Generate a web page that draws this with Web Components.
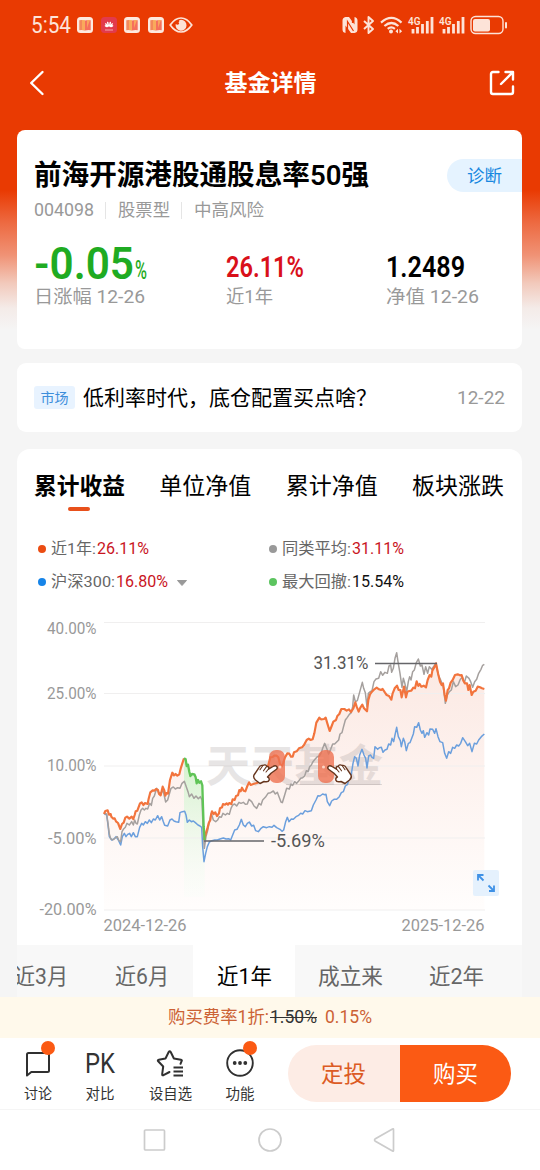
<!DOCTYPE html>
<html lang="zh-CN">
<head>
<meta charset="utf-8">
<title>基金详情</title>
<style>
  html, body {
    margin: 0;
    width: 540px;
    height: 1170px;
    overflow: hidden;
    font-family: Roboto, "Noto Sans CJK SC", sans-serif;
  }
</style>
</head>
<body>
<fund-page></fund-page>

<script>
const ICONS = {
  book: { w: 16, h: 16, body: `
    <rect width="16" height="16" rx="3.5" fill="#fde9df"/>
    <path d="M2.3 3.2q3-.8 5.7.4v10q-2.8-1-5.7-.4z" fill="#f3895a"/>
    <path d="M13.7 3.2q-3-.8-5.7.4v10q2.8-1 5.7-.4z" fill="#f6705c"/>
    <path d="M5 3h3v10.300l-3-.6zM10 3l3 0-3 8z" fill="#fbb65c" opacity=".75"/>` },
  huawei: { w: 16, h: 16, body: `
    <rect width="16" height="16" rx="3.5" fill="#e23a4c"/>
    <g stroke="#fff" stroke-width="1.4" stroke-linecap="round"><path d="M7.400 9 6.700 5.500M8.600 9 9.300 5.500M6.600 9.300 4.800 6.800M9.400 9.300l1.800-2.500M6 9.600l-1.600-.8M10 9.600l1.600-.8"/></g>
    <path d="M4 13h8" stroke="#f3a2a8" stroke-width="1"/>` },
  eye: { w: 24, h: 18, body: `
    <path d="M1.2 9Q6 2 12 2t10.800 7Q18 16 12 16T1.200 9z" fill="none" stroke="#fde3d8" stroke-width="1.7"/>
    <path d="M12 3.8A5.5 5.5 0 1 1 6.7 8q2 1.5 3.3 0t0-3.400q1-.8 2-.8z" fill="#fde3d8"/>
    <circle cx="11" cy="6.5" r="1.3" fill="#fde3d8"/>` },
  nfc: { w: 16, h: 18, body: `
    <path d="M3.5 1H7l5.500 7.500V1q3 .5 3 3.500v9q0 3-3 3.500H9L3.500 9.500V17q-3-.5-3-3.500v-9Q.5 1.500 3.500 1z" fill="#fde3d8"/>
    <path d="M5.500 17V5.500l6 9.500M10.500 1v6" fill="none" stroke="#ea3a02" stroke-width="1.2"/>` },
  bluetooth: { w: 12, h: 18, body: `
    <path d="M1 5l9 8-4.500 4V1L10 5l-9 8" fill="none" stroke="#fde3d8" stroke-width="1.9" stroke-linejoin="round"/>` },
  wifi: { w: 23, h: 18, body: `
    <g fill="none" stroke="#fde3d8" stroke-width="2.2"><path d="M1 6.600q10.500-9.400 20.500 0"/><path d="M4.400 10q7-6 14 0"/><path d="M7.700 12.800q3.600-2.700 7.200 0"/></g>
    <circle cx="11" cy="15.600" r="2" fill="#fde3d8"/>
    <path d="M18 12.800v4.800l-2.600-2.400zM19.500 12.800v4.800l2.600-2.400z" fill="#fde3d8"/>` },
  signal: { w: 26, h: 18, body: `
    <text x="0" y="9" font-family="Roboto" font-size="11" font-weight="600" fill="#fde3d8" textLength="12.5" lengthAdjust="spacingAndGlyphs">4G</text>
    <path d="M5 13v4.500M9.500 11v6.500M14.500 8v9.500M19.300 5v12.500M24 1v16.500" stroke="#fde3d8" stroke-width="2.8"/>` },
  battery: { w: 38, h: 20, body: `
    <rect x="1" y="1.5" width="32" height="17" rx="4.5" fill="none" stroke="#fde3d8" stroke-width="1.4"/>
    <rect x="3" y="4" width="17" height="12.5" rx="2" fill="#fde3d8"/>
    <path d="M36 8v4.500" stroke="#fde3d8" stroke-width="2" stroke-linecap="round"/>` },
  back: { w: 16, h: 26, body: `
    <path d="M13.500 2 2.200 13l11.300 11" fill="none" stroke="#fff" stroke-width="2.4" stroke-linecap="round" stroke-linejoin="round"/>` },
  share: { w: 26, h: 26, body: `
    <g fill="none" stroke="#fff" stroke-width="2.4" stroke-linecap="round" stroke-linejoin="round"><path d="M9.500 2H4Q2 2 2 4v18q0 2 2 2h18q2 0 2-2v-5.500"/><path d="M12 14 24 2M16.500 2H24v7.500"/></g>` },
  caret: { w: 10, h: 6, body: `<path d="M.5.500h9L5 5.500z" fill="#999" stroke="#999" stroke-linejoin="round"/>` },
  expand: { w: 26, h: 26, body: `
    <rect width="26" height="26" rx="2" fill="#e5f1fd"/>
    <path d="M10.500 5H5v5.500M5 5l5.500 5.500M16 21h5v-5.500M21 21l-5.500-5.500" fill="none" stroke="#3f91e6" stroke-width="1.8"/>` },
  comment: { w: 28, h: 28, body: `
    <path d="M3 5.500Q3 4 4.500 4h19Q25 4 25 5.500v16q0 1.500-1.500 1.500H7.300L3 26.500z" fill="none" stroke="#303030" stroke-width="2" stroke-linejoin="round"/>` },
  star: { w: 30, h: 28, body: `
    <g fill="none" stroke="#303030" stroke-width="2" stroke-linecap="round" stroke-linejoin="round"><path d="M14.500 23 8.500 26.200q-1.500.5-1.300-1.200l1-7.500-5-5.200q-1-1.300.6-1.600l6.700-1.200 3.200-6.500q1-1.500 2 0l3.200 6.500 7 1.200q1.600.4.600 1.600L25.500 14.800"/><path d="M18.500 18.500h9.500M18.500 22.500h9.500M18.500 26.500h9.500" stroke-linecap="butt"/></g>` },
  more: { w: 30, h: 30, body: `
    <circle cx="15" cy="15" r="12.800" fill="none" stroke="#303030" stroke-width="1.9"/>
    <g fill="#303030"><circle cx="9.700" cy="15" r="1.900"/><circle cx="15" cy="15" r="1.900"/><circle cx="20.300" cy="15" r="1.900"/></g>` },
  square: { w: 24, h: 24, body: `<rect x="1.500" y="2" width="20" height="20" rx="1" fill="none" stroke="#ccc" stroke-width="1.7"/>` },
  circle: { w: 24, h: 24, body: `<circle cx="12" cy="12" r="11" fill="none" stroke="#ccc" stroke-width="1.7"/>` },
  triangle: { w: 24, h: 24, body: `<path d="M19.500 1.500v21Q19.500 23.500 18.500 23L1 13Q0 12 1 11L18.500 1q1-.5 1 .5z" fill="none" stroke="#ccc" stroke-width="1.7"/>` }
};

class UiIcon extends HTMLElement {
  connectedCallback() {
    const icon = ICONS[this.getAttribute("name")];
    this.attachShadow({ mode: "open" }).innerHTML = `
      <style>
        :host { display: block; flex: none; width: ${icon.w}px; height: ${icon.h}px; }
        svg { display: block; overflow: visible; }
      </style>
      <svg width="${icon.w}" height="${icon.h}" viewBox="0 0 ${icon.w} ${icon.h}">${icon.body}</svg>
    `;
  }
}

// One line of text, condensed or stretched to the width given in "w"
class FitText extends HTMLElement {
  connectedCallback() {
    const width = this.getAttribute("w");
    this.attachShadow({ mode: "open" }).innerHTML = `
      <style>
        :host { display: block; flex: none; width: ${width}px; white-space: nowrap; }
        span { display: inline-block; vertical-align: top; transform-origin: 0 50%; }
      </style>
      <span><slot></slot></span>
    `;
    const span = this.shadowRoot.querySelector("span");
    span.style.transform = `scaleX(${width / span.getBoundingClientRect().width})`;
  }
}

class StatusBar extends HTMLElement {
  constructor() {
    super();
    this.attachShadow({ mode: "open" }).innerHTML = `
      <style>
        :host { display: flex; align-items: center; box-sizing: border-box; height: 50px; padding: 0 32px 0 31px; color: #fde3d8; }
        .time { font-size: 23px; line-height: 26px; margin: 2px 6px 0 0; }
        .apps, .system { display: flex; align-items: center; }
        .apps { gap: 7.6px; }
        .system { margin-left: auto; gap: 5px; }
      </style>
      <fit-text class="time" w="40">5:54</fit-text>
      <div class="apps">
        <ui-icon name="book"></ui-icon>
        <ui-icon name="huawei"></ui-icon>
        <ui-icon name="book"></ui-icon>
        <ui-icon name="book"></ui-icon>
        <ui-icon name="eye" style="margin-left:-2px"></ui-icon>
      </div>
      <div class="system">
        <ui-icon name="nfc"></ui-icon>
        <ui-icon name="bluetooth"></ui-icon>
        <ui-icon name="wifi"></ui-icon>
        <ui-icon name="signal"></ui-icon>
        <ui-icon name="signal"></ui-icon>
        <ui-icon name="battery"></ui-icon>
      </div>
    `;
  }
}

class NavHeader extends HTMLElement {
  constructor() {
    super();
    this.attachShadow({ mode: "open" }).innerHTML = `
      <style>
        :host { display: flex; align-items: center; justify-content: space-between; box-sizing: border-box; height: 66px; padding: 0 25px 0 29px; color: #fff; }
        .title { font-size: 23px; line-height: 30px; font-weight: 700; margin: 2px 0 0 7px; }
      </style>
      <ui-icon name="back"></ui-icon>
      <fit-text class="title" w="92"><slot></slot></fit-text>
      <ui-icon name="share"></ui-icon>
    `;
  }
}

class FundSummary extends HTMLElement {
  constructor() {
    super();
    this.attachShadow({ mode: "open" }).innerHTML = `
      <style>
        :host { display: block; box-sizing: border-box; height: 219px; padding: 29px 0 0 17px; background: #fff; border-radius: 8px; }
        .top { display: flex; align-items: center; justify-content: space-between; height: 33px; }
        .name { font-size: 28px; line-height: 33px; font-weight: 600; color: #000; }
        .diagnose { display: flex; align-items: center; box-sizing: border-box; width: 75px; height: 33px; padding: 0 0 2px 20px; border-radius: 17px 0 0 17px; background: #e5f3ff; color: #1787e0; font-size: 17.5px; }
        .meta { display: flex; align-items: center; height: 24px; margin-top: 6px; color: #999; font-size: 17.5px; line-height: 24px; }
        .code { font-size: 19px; }
        .meta i { width: 1px; height: 17px; background: #e5e5e5; margin: 0 12px 0 11px; }
        .stats { display: grid; grid-template-columns: 192px 160px 1fr; margin-top: 20px; }
        .value { display: flex; align-items: baseline; height: 44px; line-height: 44px; }
        .label { color: #999; font-size: 18px; line-height: 22px; }
        .green { color: #1fab22; }
        .red { color: #d9101a; }
        .big { display: flex; font-size: 45px; font-weight: 600; }
        .unit { font-size: 25px; margin-left: 1px; font-weight: 500; }
        .mid { font-size: 29px; font-weight: 600; margin-top: 3px; }
      </style>
      <div class="top">
        <fit-text class="name" w="335">前海开源港股通股息率50强</fit-text>
        <div class="diagnose"><fit-text w="35">诊断</fit-text></div>
      </div>
      <div class="meta">
        <fit-text class="code" w="60">004098</fit-text><i></i>
        <fit-text w="52">股票型</fit-text><i></i>
        <fit-text w="70">中高风险</fit-text>
      </div>
      <div class="stats">
        <div>
          <div class="value green"><fit-text class="big" w="100">-0.05</fit-text><fit-text class="unit" w="12">%</fit-text></div>
          <fit-text class="label" w="111">日涨幅 12-26</fit-text>
        </div>
        <div>
          <div class="value red"><fit-text class="mid" w="78">26.11%</fit-text></div>
          <fit-text class="label" w="47">近1年</fit-text>
        </div>
        <div>
          <div class="value"><fit-text class="mid" w="79">1.2489</fit-text></div>
          <fit-text class="label" w="93">净值 12-26</fit-text>
        </div>
      </div>
    `;
  }
}

class NewsRow extends HTMLElement {
  constructor() {
    super();
    this.attachShadow({ mode: "open" }).innerHTML = `
      <style>
        :host { display: flex; align-items: center; box-sizing: border-box; height: 69px; padding: 0 17px; background: #fff; border-radius: 9px; }
        .tag { display: flex; align-items: center; justify-content: center; box-sizing: border-box; width: 41px; height: 23px; padding-bottom: 2px; border-radius: 3px; background: #e8f3ff; color: #3d8edb; font-size: 14px; }
        .text { margin-left: 8px; font-size: 21px; line-height: 30px; color: #000; }
        .date { margin-left: auto; font-size: 18.5px; line-height: 24px; color: #999; }
      </style>
      <div class="tag"><fit-text w="28">市场</fit-text></div>
      <fit-text class="text" w="294">低利率时代，底仓配置买点啥？</fit-text>
      <fit-text class="date" w="48">12-22</fit-text>
    `;
  }
}

class LegendItem extends HTMLElement {
  connectedCallback() {
    const { label, lw, value, color, tone = "#c9151e" } = this.dataset;
    this.attachShadow({ mode: "open" }).innerHTML = `
      <style>
        :host { display: flex; align-items: center; height: 33px; font-size: 15.5px; line-height: 22px; color: #666; }
        .dot { width: 8px; height: 8px; margin-right: 5px; border-radius: 50%; background: ${color}; }
        fit-text { margin-top: 1px; }
        .value { margin-left: 1px; font-size: 16.5px; color: ${tone}; }
      </style>
      <span class="dot"></span>
      <fit-text w="${lw}">${label}:</fit-text>
      <fit-text class="value" w="52">${value}</fit-text>
      <slot></slot>
    `;
  }
}

// Series are plotted on a grid of a third of a pixel
const MAIN_RISE = "42,522 46,513 53,511 57,524 62,522 64,530 70,536 74,535 78,544 84,549 91,567 96,552 101,548 106,533 111,530 118,536 125,530 130,537 134,525 137,514 142,512 150,490 155,487 160,495 165,489 173,492 176,476 181,457 188,451 193,452 198,447 204,450 207,462 212,466 218,440 223,451 226,467 229,459 234,461 240,420 247,398 252,406 257,402 262,407 268,403 272,386 277,370 282,355";
const MAIN_DRAWDOWN = "282,355 287,358 290,378 294,374 298,395 301,408 306,402 313,403 317,412 320,430 324,420 328,428 333,424 337,436 339,500 341,560 344,600";
const MAIN_LEFT = "344,600 345,590 348,578 352,566 356,550 361,540 363,525 366,514 371,522 376,517 381,528 387,520 390,505 396,502 399,492 405,494 410,490 414,494 418,489 424,492 428,478 434,480 438,468 444,466 448,450 452,454 456,443 461,452 466,454 472,438 477,427 482,435 490,432 497,430 503,428 515,410 525,395 535,375 541,352 548,351 553,347 560,347 565,352 570,372 575,380 580,368 585,352";
const MAIN_RIGHT = "22,340 28,341 33,350 38,350 42,337 50,334 57,325 66,322 72,315 80,300 86,296 92,300 98,298 103,280 109,248 118,233 123,238 132,237 137,233 142,250 149,273 155,258 160,245 168,240 172,228 178,222 184,207 193,207 200,212 207,208 213,216 220,205 226,187 230,200 236,215 241,203 247,194 252,205 261,214 265,180 270,163 276,155 283,148 290,143 297,148 303,150 308,147 315,158 320,165 327,168 334,179 338,160 344,145 351,137 356,150 361,150 365,172 372,140 378,172 382,155 388,153 394,152 400,143 405,145 410,124 415,138 419,132 424,140 431,137 438,142 443,120 449,105 454,110 457,92 464,80 468,70 474,100 480,125 485,135 489,130 494,165 498,182 503,150 507,145 512,128 518,120 525,105 533,103 540,106 545,105 550,122 555,130 561,130 565,150 569,135 575,165 580,155 587,152 593,140 600,142 606,145 613,147";
const PEER_LEFT = "42,520 50,522 54,550 58,582 62,596 68,600 76,594 82,590 87,602 92,605 96,575 100,568 106,562 111,550 118,555 125,545 130,555 134,540 138,550 142,552 148,525 153,510 158,505 163,510 168,505 173,507 179,490 184,496 188,475 193,468 200,445 207,460 213,458 219,452 223,468 227,486 233,480 238,462 243,445 250,441 256,447 263,443 270,445 276,430 283,424 288,438 294,455 298,470 305,462 312,475 318,468 325,476 331,470 336,480 339,560 343,625 348,590 353,572 358,545 364,520 370,540 377,545 383,540 388,530 394,532 399,520 406,525 412,520 418,523 423,505 428,495 434,492 440,498 447,487 453,490 460,487 466,493 472,492 477,478 485,485 492,498 500,505 507,490 513,495 518,480 526,472 534,460 542,458 550,453 556,462 562,457 567,470";
const PEER_RIGHT = "3,486 7,488 14,465 20,445 28,447 33,432 38,436 44,425 50,430 56,423 62,415 68,413 74,408 79,392 84,395 89,380 94,375 99,365 105,358 112,350 118,348 124,338 128,325 134,310 140,325 146,342 152,328 158,312 164,312 170,306 176,300 180,282 186,278 190,262 196,240 202,232 208,223 214,218 218,200 221,165 226,185 232,182 238,160 247,127 251,145 256,158 261,200 265,160 271,155 276,152 282,125 288,117 296,115 302,95 308,106 315,97 322,100 327,78 332,75 335,97 340,85 345,55 350,38 354,65 360,100 366,142 370,115 374,128 380,155 385,125 389,110 393,120 398,95 403,90 409,68 415,57 421,78 426,75 432,103 437,80 443,100 448,80 455,88 462,78 468,72 475,105 482,120 490,140 496,190 502,165 508,155 514,150 520,125 527,140 534,135 541,118 547,112 553,128 559,108 567,115 572,125 578,142 584,125 590,118 596,100 603,88 608,76 613,73";
const INDEX_LEFT = "42,520 50,525 54,555 58,590 65,600 72,597 78,590 85,600 92,615 97,590 103,580 108,590 113,583 119,580 124,590 130,578 136,590 142,590 149,562 155,550 160,555 166,545 172,550 178,540 184,548 190,537 196,540 203,527 209,540 215,530 220,545 224,556 233,558 240,540 246,537 252,543 258,545 266,547 270,518 277,515 284,514 288,525 292,547 298,540 304,545 310,543 316,548 324,555 330,558 335,562 338,620 342,665 347,640 352,620 358,606 366,602 374,600 382,600 390,597 400,594 408,597 416,596 422,600 428,585 434,570 441,568 448,555 454,538 460,555 466,560 472,550 478,546 485,558 491,556 497,572 505,575 512,566 520,560 530,563 538,560 546,562 552,556 560,563";
const INDEX_RIGHT = "0,568 6,574 11,570 17,545 22,532 27,545 34,537 40,538 48,530 56,526 62,520 68,522 75,512 82,515 94,512 100,495 108,480 114,467 120,468 128,462 134,464 138,463 142,485 149,497 155,483 162,478 170,478 178,470 184,458 190,455 196,438 202,434 208,415 214,402 219,370 224,350 229,355 234,378 239,345 246,328 252,345 257,355 261,384 266,348 272,345 276,352 281,355 285,320 293,328 298,323 304,322 309,337 315,330 321,328 326,312 332,315 336,295 341,305 345,285 350,262 355,290 361,302 364,320 370,295 374,305 379,332 385,310 390,308 394,298 400,282 404,260 410,262 416,248 421,270 426,280 430,272 434,292 441,278 446,285 450,267 458,268 464,280 468,266 474,290 480,305 488,308 494,340 500,355 506,335 512,340 518,322 524,325 530,315 536,318 542,310 548,293 556,305 563,317 569,310 576,335 583,310 590,312 596,300 604,290 613,282";

const shift = (points, dx) =>
  points
    .split(" ")
    .map((p) => {
      const [x, y] = p.split(",").map(Number);
      return `${x + dx},${y}`;
    })
    .join(" ");

class YieldChart extends HTMLElement {
  constructor() {
    super();
    const recovery = MAIN_LEFT + " " + shift(MAIN_RIGHT, 570);
    const peer = PEER_LEFT + " " + shift(PEER_RIGHT, 570);
    const index = INDEX_LEFT + " " + shift(INDEX_RIGHT, 570);
    const grid = [622.5, 693.5, 766, 838, 910];
    const ticks = ["40.00%", "25.00%", "10.00%", "-5.00%", "-20.00%"];
    const tickX = [47, 47, 47, 48, 39.5];
    const hand = `
      <path d="M.5-.8Q2-2 4-.5L8.500 2.200Q7.500-.6 10.300-.8 11.500-3 14.200-1.500 16.800-2.200 18.200.8L23 8Q24.200 10.500 21.500 13L17 16.500 13 14.500Q8.500 15.500 7.800 13 7.500 10.500 9.500 10L6 6.200.5 2.300Q-1 .8.5-.8z" fill="#fff" stroke="#66351d" stroke-width="1.4" stroke-linejoin="round"/>
      <path d="M8.500 2l2.500 3M10.500-.4l3 4.200M14.300-1.200l2.700 3.900" fill="none" stroke="#66351d" stroke-width="1.1" stroke-linecap="round"/>`;

    this.attachShadow({ mode: "open" }).innerHTML = `
      <style>
        :host { display: block; position: relative; height: 345px; }
        svg { display: block; }
        text { font-family: Roboto, "Noto Sans CJK SC", sans-serif; }
        .axis { font-size: 16px; fill: #999; }
        .mark { font-size: 18px; fill: #555; }
        .line { fill: none; stroke-linejoin: round; }
        ui-icon { position: absolute; right: 23px; bottom: 49px; }
      </style>
      <svg width="505" height="345" viewBox="17 600 505 345">
        <defs>
          <linearGradient id="warm" gradientUnits="userSpaceOnUse" x1="0" y1="70" x2="0" y2="810">
            <stop offset="0" stop-color="#fbe5de"/><stop offset="1" stop-color="#fffdfc"/>
          </linearGradient>
          <linearGradient id="fresh" gradientUnits="userSpaceOnUse" x1="0" y1="355" x2="0" y2="770">
            <stop offset="0" stop-color="#d2f2cc"/><stop offset="1" stop-color="#f3fff7" stop-opacity=".2"/>
          </linearGradient>
        </defs>
        <g transform="translate(90 640) scale(.333333)">
          <polygon points="${MAIN_RISE} ${MAIN_DRAWDOWN} ${recovery} 1183,810 42,810" fill="url(#warm)" opacity=".85"/>
          <polygon points="${MAIN_DRAWDOWN} 344,770 282,770" fill="url(#fresh)"/>
        </g>
        ${grid.map((y) => `<path d="M104 ${y}h381" stroke="#f0efef" stroke-width="1"/>`).join("")}
        <text x="206" y="782" font-size="44" font-weight="700" fill="#8a8080" opacity=".2" textLength="177" lengthAdjust="spacingAndGlyphs">天天基金</text>
        <path d="M286 784.500h96" stroke="#8a8080" stroke-opacity=".25"/>
        <g class="line" transform="translate(90 640) scale(.333333)">
          <polyline points="${index}" stroke="#6b9fdd" stroke-width="4.500"/>
          <polyline points="${peer}" stroke="#a5a09e" stroke-width="4.500"/>
          <polyline points="${MAIN_RISE}" stroke="#f2743d" stroke-width="6.500"/>
          <polyline points="${recovery}" stroke="#f2743d" stroke-width="6.500"/>
          <polyline points="${MAIN_DRAWDOWN}" stroke="#5fc456" stroke-width="7"/>
        </g>
        <path d="M375 663.500h62M204 841h60" stroke="#656569" stroke-width="1.4"/>
        <text class="mark" x="313.500" y="669" textLength="55" lengthAdjust="spacingAndGlyphs">31.31%</text>
        <text class="mark" x="271" y="846.500" textLength="54" lengthAdjust="spacingAndGlyphs">-5.69%</text>
        <g fill="#ed7150" fill-opacity=".8">
          <rect x="269" y="750" width="16" height="33" rx="7"/>
          <rect x="318" y="750" width="16" height="33" rx="7"/>
        </g>
        <circle cx="280" cy="767" r="1.500" fill="#fcd5c6"/><circle cx="323.500" cy="767" r="1.500" fill="#fcd5c6"/>
        <g transform="translate(328 767)">${hand}</g>
        <g transform="translate(277 767) scale(-1 1)">${hand}</g>
        ${ticks.map((t, i) => `<text class="axis" x="${tickX[i]}" y="${[633.5, 699, 771, 843.5, 915][i]}" textLength="${96.500 - tickX[i]}" lengthAdjust="spacingAndGlyphs">${t}</text>`).join("")}
        <text class="axis" x="103.500" y="930.500" textLength="83" lengthAdjust="spacingAndGlyphs">2024-12-26</text>
        <text class="axis" x="401.500" y="930.500" textLength="83" lengthAdjust="spacingAndGlyphs">2025-12-26</text>
      </svg>
      <ui-icon name="expand"></ui-icon>
    `;
  }
}

class YieldCard extends HTMLElement {
  constructor() {
    super();
    this.attachShadow({ mode: "open" }).innerHTML = `
      <style>
        :host { display: block; height: 548px; background: #fff; border-radius: 13px 13px 0 0; overflow: hidden; }
        .tabs { display: flex; justify-content: space-between; padding: 22px 18px 0 17px; height: 62px; box-sizing: border-box; font-size: 23px; line-height: 32px; color: #000; }
        .active { font-weight: 700; }
        .active::after { content: ""; display: block; width: 22px; height: 4px; margin: 4px 0 0 34px; border-radius: 2px; background: #e8501b; }
        .legend { display: grid; grid-template-columns: 231px 1fr; padding: 21px 0 0 21px; }
        ui-icon[name="caret"] { margin: 2px 0 0 9px; }
        yield-chart { margin-top: 2px; }
        .periods { display: grid; grid-template-columns: 100px 102px 102px 110px 102px 40px; margin-left: -26px; height: 52px; background: #f8f8f8; color: #666; font-size: 22px; line-height: 64px; }
        .periods div { display: flex; justify-content: center; height: 52px; overflow: hidden; }
        .periods .on { background: #fff; color: #000; }
      </style>
      <div class="tabs">
        <div class="active"><fit-text w="91">累计收益</fit-text></div>
        <fit-text w="92">单位净值</fit-text>
        <fit-text w="92">累计净值</fit-text>
        <fit-text w="92">板块涨跌</fit-text>
      </div>
      <div class="legend">
        <legend-item data-label="近1年" data-lw="45" data-value="26.11%" data-color="#eb4c12"></legend-item>
        <legend-item data-label="同类平均" data-lw="69" data-value="31.11%" data-color="#999"></legend-item>
        <legend-item data-label="沪深300" data-lw="64" data-value="16.80%" data-color="#1684e8"><ui-icon name="caret"></ui-icon></legend-item>
        <legend-item data-label="最大回撤" data-lw="69" data-value="15.54%" data-color="#5cc45f" data-tone="#111"></legend-item>
      </div>
      <yield-chart></yield-chart>
      <div class="periods">
        <div><fit-text w="54">近3月</fit-text></div>
        <div><fit-text w="54">近6月</fit-text></div>
        <div class="on"><fit-text w="55">近1年</fit-text></div>
        <div><fit-text w="65">成立来</fit-text></div>
        <div><fit-text w="55">近2年</fit-text></div>
      </div>
    `;
  }
}

class FeeBar extends HTMLElement {
  constructor() {
    super();
    this.attachShadow({ mode: "open" }).innerHTML = `
      <style>
        :host { display: flex; align-items: center; justify-content: center; box-sizing: border-box; height: 41px; padding-bottom: 1px; background: #fff9eb; color: #cc6235; font-size: 17.5px; line-height: 24px; }
        .rate { font-size: 18.5px; }
        .old { margin: 0 8px 0 1px; color: #333; }
        del { text-decoration-thickness: 1px; }
      </style>
      <fit-text w="101">购买费率1折:</fit-text>
      <fit-text class="rate old" w="47"><del>1.50%</del></fit-text>
      <fit-text class="rate" w="47">0.15%</fit-text>
    `;
  }
}

class ActionItem extends HTMLElement {
  connectedCallback() {
    this.attachShadow({ mode: "open" }).innerHTML = `
      <style>
        :host { display: flex; flex-direction: column; align-items: center; position: relative; font-size: 14.5px; line-height: 20px; color: #333; }
        .icon { display: flex; align-items: center; justify-content: center; height: 38px; margin: 6px 0 3px; }
        .dot { position: absolute; top: 3px; right: 50%; margin-right: -17px; width: 14px; height: 14px; border-radius: 50%; background: #fb5a14; }
      </style>
      <div class="icon"><slot></slot></div>
      <fit-text w="${this.getAttribute("lw")}">${this.getAttribute("label")}</fit-text>
      ${this.hasAttribute("dot") ? '<span class="dot"></span>' : ""}
    `;
  }
}

class ActionBar extends HTMLElement {
  constructor() {
    super();
    this.attachShadow({ mode: "open" }).innerHTML = `
      <style>
        :host { display: flex; box-sizing: border-box; height: 72px; padding-right: 29px; background: #fff; border-bottom: 1px solid #f5f5f5; }
        .items { display: grid; grid-template-columns: 62px 62px 78px 62px; margin-left: 7px; width: 264px; }
        .pk { font-size: 28px; line-height: 34px; margin-top: 2px; color: #333; }
        .buttons { display: grid; grid-template-columns: 1fr 1fr; width: 223px; height: 57px; margin: 7px 0 0 auto; border-radius: 29px; overflow: hidden; font-size: 23px; }
        .buttons div { display: flex; align-items: center; justify-content: center; box-sizing: border-box; padding-bottom: 3px; background: #fb5a14; color: #fff; }
        .buttons .plan { background: #fdece5; color: #dc5b24; }
      </style>
      <div class="items">
        <action-item label="讨论" lw="28" dot><ui-icon name="comment"></ui-icon></action-item>
        <action-item label="对比" lw="29"><fit-text class="pk" w="30">PK</fit-text></action-item>
        <action-item label="设自选" lw="43"><ui-icon name="star"></ui-icon></action-item>
        <action-item label="功能" lw="29" dot><ui-icon name="more"></ui-icon></action-item>
      </div>
      <div class="buttons">
        <div class="plan"><fit-text w="45">定投</fit-text></div>
        <div><fit-text w="45">购买</fit-text></div>
      </div>
    `;
  }
}

class SystemNav extends HTMLElement {
  constructor() {
    super();
    this.attachShadow({ mode: "open" }).innerHTML = `
      <style>
        :host { display: flex; align-items: center; justify-content: center; gap: 91.5px; height: 60px; background: #fff; }
      </style>
      <ui-icon name="square"></ui-icon>
      <ui-icon name="circle"></ui-icon>
      <ui-icon name="triangle"></ui-icon>
    `;
  }
}

class FundPage extends HTMLElement {
  constructor() {
    super();
    this.attachShadow({ mode: "open" }).innerHTML = `
      <style>
        :host { display: block; height: 1170px; background: linear-gradient(#e93a02 0, #e93a02 190px, #ed6940 222px, #f09275 255px, #f2c9bb 283px, #f4ebe8 308px, #f5f5f5 330px); }
        nav-header { margin-bottom: 14px; }
        main { padding: 0 18px 0 17px; }
        news-row { margin: 14px 0 17px; }
      </style>
      <status-bar></status-bar>
      <nav-header>基金详情</nav-header>
      <main>
        <fund-summary></fund-summary>
        <news-row></news-row>
        <yield-card></yield-card>
      </main>
      <fee-bar></fee-bar>
      <action-bar></action-bar>
      <system-nav></system-nav>
    `;
  }
}

customElements.define("ui-icon", UiIcon);
customElements.define("fit-text", FitText);
customElements.define("status-bar", StatusBar);
customElements.define("nav-header", NavHeader);
customElements.define("fund-summary", FundSummary);
customElements.define("news-row", NewsRow);
customElements.define("legend-item", LegendItem);
customElements.define("yield-chart", YieldChart);
customElements.define("yield-card", YieldCard);
customElements.define("fee-bar", FeeBar);
customElements.define("action-item", ActionItem);
customElements.define("action-bar", ActionBar);
customElements.define("system-nav", SystemNav);
customElements.define("fund-page", FundPage);
</script>
</body>
</html>
